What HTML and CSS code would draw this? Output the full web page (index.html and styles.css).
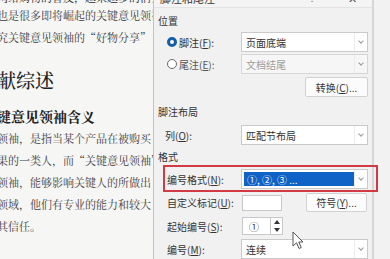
FILE: index.html
```html
<!DOCTYPE html>
<html lang="zh-CN">
<head>
    <meta charset="UTF-8">
    <meta name="viewport" content="width=device-width, initial-scale=1.0">
    <title>脚注和尾注</title>
<link rel="stylesheet" href="styles.css">
</head>
<body>
    <div class="doc">
        <div class="doc-inner">
            <p class="line cut">网络购物的普及，越来越多的消费者在购买</p>
            <p class="line">也是很多即将崛起的关键意见领袖</p>
            <p class="line">究关键意见领袖的“好物分享”</p>
            <h1 class="doc-title">献综述</h1>
            <h2 class="doc-sub">键意见领袖含义</h2>
            <p class="line">领袖，是指当某个产品在被购买</p>
            <p class="line">果的一类人，而“关键意见领袖”</p>
            <p class="line">领袖，能够影响关键人的所做出</p>
            <p class="line">领域，他们有专业的能力和较大</p>
            <p class="line">其信任。</p>
        </div>
    </div>

    <div class="dialog">
        <div class="titlebar">
            <span class="title">脚注和尾注</span>
            <span class="help">?</span>
            <span class="close">✕</span>
        </div>

        <div class="group">位置</div>
        <div class="row row-radio first">
            <div class="lbl"><span class="radio checked"></span>脚注(<u>F</u>):</div>
            <div class="select"><span class="val">页面底端</span><span class="chev"></span></div>
        </div>
        <div class="row row-radio second">
            <div class="lbl"><span class="radio"></span>尾注(<u>E</u>):</div>
            <div class="select disabled"><span class="val">文档结尾</span><span class="chev"></span></div>
        </div>
        <div class="row row-btn">
            <div class="lbl"></div>
            <div class="ctl"><button class="btn convert">转换(<u>C</u>)...</button></div>
        </div>

        <div class="group layout">脚注布局</div>
        <div class="row row-col">
            <div class="lbl">列(<u>O</u>):</div>
            <div class="select"><span class="val">匹配节布局</span><span class="chev"></span></div>
        </div>

        <div class="group format">格式</div>
        <div class="row row-mark">
            <div class="lbl">编号格式(<u>N</u>):</div>
            <div class="select"><span class="val"><span class="sel">①, ②, ③ ...</span></span><span class="chev"></span></div>
        </div>
        <div class="row row-custom">
            <div class="lbl">自定义标记(<u>U</u>):</div>
            <div class="ctl">
                <span class="field"></span>
                <button class="btn symbol">符号(<u>Y</u>)...</button>
            </div>
        </div>
        <div class="row row-start">
            <div class="lbl">起始编号(<u>S</u>):</div>
            <div class="ctl">
                <span class="spin">
                    <span class="spin-field">①</span>
                    <span class="spin-btns"><span class="up"></span><span class="down"></span></span>
                </span>
            </div>
        </div>
        <div class="row row-num">
            <div class="lbl">编号(<u>M</u>):</div>
            <div class="select"><span class="val">连续</span><span class="chev"></span></div>
        </div>
    </div>

    <svg class="cursor" width="12" height="19" viewBox="0 0 12 19">
        <path d="M1 1 L1 15 L4.5 11.8 L7 17.5 L9.2 16.5 L6.8 11 L11 11 Z" fill="#fff" stroke="#555" stroke-width="1" stroke-linejoin="round"/>
    </svg>
</body>
</html>
```

FILE: styles.css
```css
*{
    margin: 0;
    padding: 0;
    box-sizing: border-box;
}
body{
    width: 390px;
    height: 259px;
    overflow: hidden;
    display: flex;
    background: #f2f2f2;
}

/* document behind the dialog */
.doc{
    width: 153px;
    flex: none;
    overflow: hidden;
    background: #f6f6f5;
    color: #3d3d3d;
    font-family: "Noto Serif CJK SC", "Noto Sans CJK SC", serif;
}
.doc-inner{
    margin: -18px 0 0 -3px;
}
.line{
    height: 22px;
    line-height: 22px;
    font-size: 11px;
    white-space: nowrap;
}
.line.cut{
    line-height: 30px;
    color: #2c2c2c;
}
.doc-title{
    margin-top: 16px;
    height: 32px;
    line-height: 32px;
    font-size: 19px;
    font-weight: 500;
    color: #222;
    white-space: nowrap;
    margin-bottom: 9px;
}
.doc-sub{
    height: 22px;
    line-height: 22px;
    font-size: 14px;
    font-weight: 700;
    color: #222;
    white-space: nowrap;
}

/* dialog */
.dialog{
    width: 221px;
    flex: none;
    display: flex;
    flex-direction: column;
    background: #f1f1f1;
    border-left: 1px solid #c2c2c2;
    border-right: 2px solid #d6d6d6;
    font-family: "Noto Sans CJK SC", sans-serif;
    font-size: 10px;
    color: #333;
}
.titlebar{
    margin-top: -11px;
    height: 22px;
    display: flex;
    align-items: center;
    padding-left: 6px;
    border-bottom: 1px solid #e3e3e3;
    background: #f4f4f4;
    font-size: 11px;
}
.title{
    flex: 1;
}
.help{
    width: 14px;
    color: #777;
    font-size: 9px;
    margin-right: 24px;
}
.close{
    width: 14px;
    color: #555;
    font-size: 11px;
    margin-right: 10px;
}
.group{
    margin-top: 6px;
    height: 14px;
    line-height: 14px;
    padding-left: 4px;
}
.group.layout{
    margin-top: 8px;
}
.group.format{
    margin-top: 5px;
}
.row{
    display: flex;
    align-items: center;
    height: 20px;
}
.row .lbl{
    width: 87px;
    flex: none;
    display: flex;
    align-items: center;
    white-space: nowrap;
    padding-left: 13px;
}
.row u{
    text-decoration: underline;
    text-underline-offset: 1px;
}
.row.first{
    margin-top: 4px;
}
.row.second{
    margin-top: 2px;
}
.row.second .lbl{
    color: #555;
}
.row-btn{
    margin-top: 3px;
}
.row-col{
    margin-top: 6px;
}
.row-col .lbl{
    padding-left: 11px;
}
.ctl{
    width: 127px;
    flex: none;
    display: flex;
    align-items: center;
}

.radio{
    width: 10px;
    height: 10px;
    border-radius: 50%;
    border: 1px solid #6b6b6b;
    background: #fff;
    margin-right: 2px;
    flex: none;
}
.radio.checked{
    border: 3px solid #175ea8;
}

.select{
    width: 127px;
    height: 20px;
    flex: none;
    display: flex;
    background: #fff;
    border: 1px solid #cacaca;
}
.select .val{
    flex: 1;
    display: flex;
    align-items: center;
    padding-left: 4px;
    white-space: nowrap;
    color: #333;
}
.select.disabled{
    background: #f6f6f6;
    border-color: #d6d6d6;
}
.select.disabled .val{
    color: #9d9d9d;
}
.chev{
    width: 13px;
    flex: none;
    border-left: 1px solid #ececec;
    position: relative;
}
.chev::after{
    content: "";
    position: absolute;
    left: 4px;
    top: 6px;
    width: 3px;
    height: 3px;
    border-right: 1px solid #999;
    border-bottom: 1px solid #999;
    transform: rotate(45deg);
}

.btn{
    height: 20px;
    background: #fbfbfb;
    border: 1px solid #d2d2d2;
    border-radius: 2px;
    font-family: inherit;
    font-size: 10px;
    color: #333;
}
.btn.convert{
    width: 63px;
    margin-left: auto;
}

/* highlighted row */
.row-mark{
    height: 27px;
    margin: 1px -6px 0 9px;
    border: 2px solid #d23a44;
    padding: 2px 8px 1px 2px;
    align-items: flex-start;
}
.row-mark .lbl{
    width: 74px;
    height: 20px;
    padding-left: 0;
}
.row-mark .val{
    padding: 2px 0 2px 2px;
}
.sel{
    display: flex;
    align-items: center;
    width: 100%;
    height: 100%;
    padding-left: 3px;
    background: #0f63c6;
    color: #fff;
}

.row-custom{
    height: 19px;
    margin-top: 1px;
}
.field{
    width: 40px;
    height: 16px;
    margin-left: 1px;
    background: #fff;
    border: 1px solid #c8c8c8;
}
.btn.symbol{
    width: 61px;
    height: 19px;
    margin-left: auto;
    margin-right: 1px;
}

.row-start{
    height: 18px;
    margin-top: 5px;
}
.spin{
    display: flex;
    height: 18px;
    margin-left: 1px;
}
.spin-field{
    width: 29px;
    display: flex;
    align-items: center;
    padding-left: 6px;
    background: #fff;
    border: 1px solid #c8c8c8;
}
.spin-btns{
    width: 12px;
    display: flex;
    flex-direction: column;
    justify-content: space-around;
    align-items: center;
    background: #fff;
    border: 1px solid #c8c8c8;
    border-left: 0;
}
.up, .down{
    width: 0;
    height: 0;
    border-left: 3px solid transparent;
    border-right: 3px solid transparent;
}
.up{
    border-bottom: 4px solid #333;
}
.down{
    border-top: 4px solid #333;
}

.row-num{
    margin-top: 4px;
}

.cursor{
    position: absolute;
    left: 292px;
    top: 231px;
}
```
